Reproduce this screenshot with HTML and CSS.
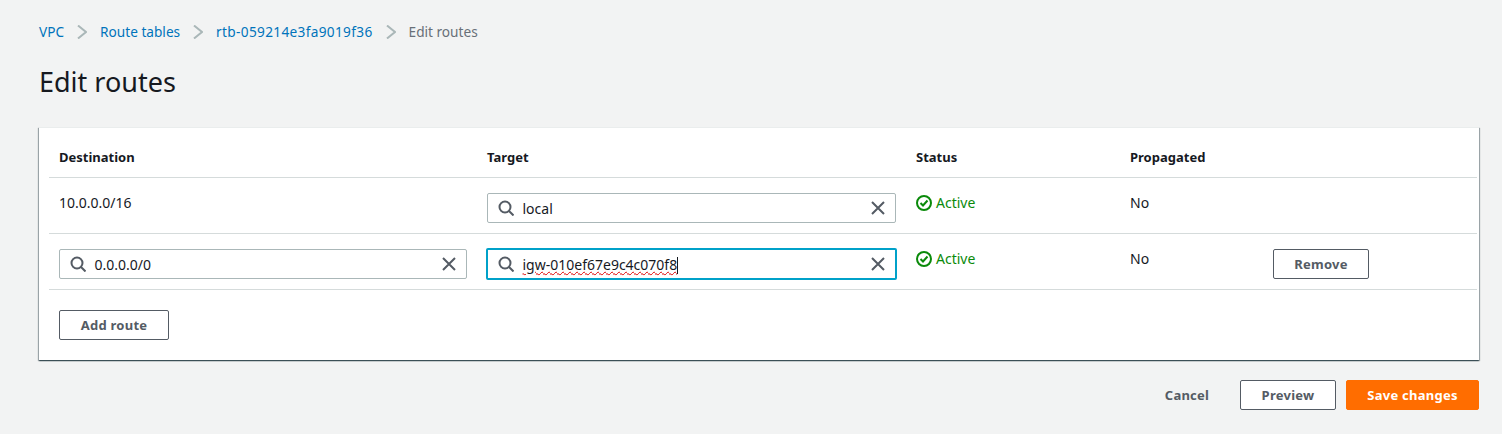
FILE: index.html
```html
<!DOCTYPE html>
<html lang="en">
<head>
  <meta charset="UTF-8">
  <title>Edit routes</title>
  <link rel="stylesheet" href="styles.css">
</head>
<body>
  <svg class="defs" width="0" height="0">
    <symbol id="i-search" viewBox="0 0 16 16"><circle cx="7" cy="7" r="5.5" fill="none" stroke="currentColor" stroke-width="2"/><path d="M11 11l4.5 4.5" fill="none" stroke="currentColor" stroke-width="2"/></symbol>
    <symbol id="i-clear" viewBox="0 0 16 16"><path d="M2 2l12 12M14 2L2 14" fill="none" stroke="currentColor" stroke-width="2"/></symbol>
    <symbol id="i-ok" viewBox="0 0 16 16"><circle cx="8" cy="8" r="7" fill="none" stroke="currentColor" stroke-width="2"/><path d="M4.5 8l2.5 2.5 4.5-5" fill="none" stroke="currentColor" stroke-width="2"/></symbol>
    <symbol id="i-chev" viewBox="0 0 10 14"><path d="M1 .5l8 6.5-8 6.5" fill="none" stroke="currentColor" stroke-width="2"/></symbol>
  </svg>

  <nav class="crumbs">
    <a href="#">VPC</a>
    <svg class="chev"><use href="#i-chev"/></svg>
    <a href="#">Route tables</a>
    <svg class="chev"><use href="#i-chev"/></svg>
    <a href="#" class="rtb-id">rtb-059214e3fa9019f36</a>
    <svg class="chev"><use href="#i-chev"/></svg>
    <span class="current">Edit routes</span>
  </nav>

  <h1>Edit routes</h1>

  <section class="card">
    <div class="row head">
      <div>Destination</div>
      <div>Target</div>
      <div>Status</div>
      <div>Propagated</div>
    </div>

    <div class="row body">
      <div>10.0.0.0/16</div>
      <div class="field">
        <svg class="ico"><use href="#i-search"/></svg>
        <span class="val">local</span>
        <svg class="ico"><use href="#i-clear"/></svg>
      </div>
      <div class="status"><svg class="ok"><use href="#i-ok"/></svg>Active</div>
      <div>No</div>
    </div>

    <div class="row body">
      <div class="field">
        <svg class="ico"><use href="#i-search"/></svg>
        <span class="val">0.0.0.0/0</span>
        <svg class="ico"><use href="#i-clear"/></svg>
      </div>
      <div class="field focus">
        <svg class="ico"><use href="#i-search"/></svg>
        <span class="val"><span class="typo">igw-010ef67e9c4c070f8</span><i class="caret"></i></span>
        <svg class="ico"><use href="#i-clear"/></svg>
      </div>
      <div class="status"><svg class="ok"><use href="#i-ok"/></svg>Active</div>
      <div>No</div>
      <button class="btn">Remove</button>
    </div>

    <div class="add">
      <button class="btn">Add route</button>
    </div>
  </section>

  <footer class="actions">
    <button class="btn link">Cancel</button>
    <button class="btn">Preview</button>
    <button class="btn primary">Save changes</button>
  </footer>
</body>
</html>
```

FILE: styles.css
```css
body {
  margin: 0;
  height: 434px;
  overflow: hidden;
  background-color: #f2f3f3;
  color: #16191f;
  font-family: "Noto Sans", sans-serif;
  font-size: 14px;
  line-height: 20px;
  padding: 0 23px 0 39px;
  box-sizing: border-box;
}
.defs {
  position: absolute;
}
.crumbs {
  display: flex;
  align-items: center;
  height: 20px;
  padding-top: 22px;
  font-size: 13.65px;
}
.crumbs a {
  color: #0073bb;
  text-decoration: none;
}
.crumbs .rtb-id {
  letter-spacing: 0.33px;
}
.crumbs .current {
  color: #687078;
}
.chev {
  width: 10px;
  height: 14px;
  margin: 0 13px;
  color: #aab7b8;
}
h1 {
  margin: 18px 0 0;
  font-size: 27px;
  line-height: 44px;
  font-weight: 400;
}
.card {
  margin-top: 23px;
  height: 233px;
  box-sizing: border-box;
  background-color: #fff;
  border-top: 1px solid #eaeded;
  box-shadow: 0 1px 1px 0 rgba(0, 28, 36, 0.5), 1px 1px 1px 0 rgba(0, 28, 36, 0.3), -1px 1px 1px 0 rgba(0, 28, 36, 0.3);
}
.row {
  display: grid;
  grid-template-columns: 408px 409px 194px 123px 96px;
  column-gap: 20px;
  margin: 0 2px 0 10px;
  padding-left: 10px;
  border-bottom: 1px solid #d5dbdb;
}
.head {
  height: 50px;
  padding-top: 9px;
  box-sizing: border-box;
  align-items: center;
  font-size: 13px;
  font-weight: 700;
}
.body {
  height: 40px;
  padding-top: 15px;
}
.field {
  display: flex;
  align-items: center;
  height: 28px;
  padding: 0 9px 0 10px;
  background-color: #fff;
  border: 1px solid #aab7b8;
  border-radius: 2px;
  color: #545b64;
}
.field.focus {
  border: 2px solid #00a1c9;
  margin: -1px;
}
.ico {
  width: 16px;
  height: 16px;
  flex: none;
}
.val {
  flex: 1;
  margin-left: 8.5px;
  padding-top: 1px;
}
.val,
.typo {
  color: #16191f;
}
.typo {
  text-decoration: underline wavy #e00000 1px;
  text-underline-offset: 1px;
}
.caret {
  display: inline-block;
  width: 1px;
  height: 17px;
  background-color: #16191f;
  vertical-align: -4px;
}
.status {
  display: flex;
  align-items: flex-start;
  color: #0a8a0a;
}
.ok {
  width: 16px;
  height: 16px;
  margin: 2px 4px 0 0;
}
.btn {
  box-sizing: border-box;
  height: 30px;
  width: 96px;
  padding: 0;
  background-color: #fff;
  border: 1px solid #545b64;
  border-radius: 2px;
  color: #545b64;
  font-family: inherit;
  font-size: 13px;
  font-weight: 700;
  letter-spacing: 0.25px;
}
.add {
  padding: 20px 0 0 20px;
}
.add .btn {
  width: 110px;
}
.actions {
  display: flex;
  justify-content: flex-end;
  gap: 10px;
  margin-top: 20px;
}
.btn.link {
  border: none;
  background: none;
  width: 86px;
}
.btn.primary {
  width: 133px;
  background-color: #ff6d00;
  border-color: #ff6d00;
  color: #fff;
}
```
